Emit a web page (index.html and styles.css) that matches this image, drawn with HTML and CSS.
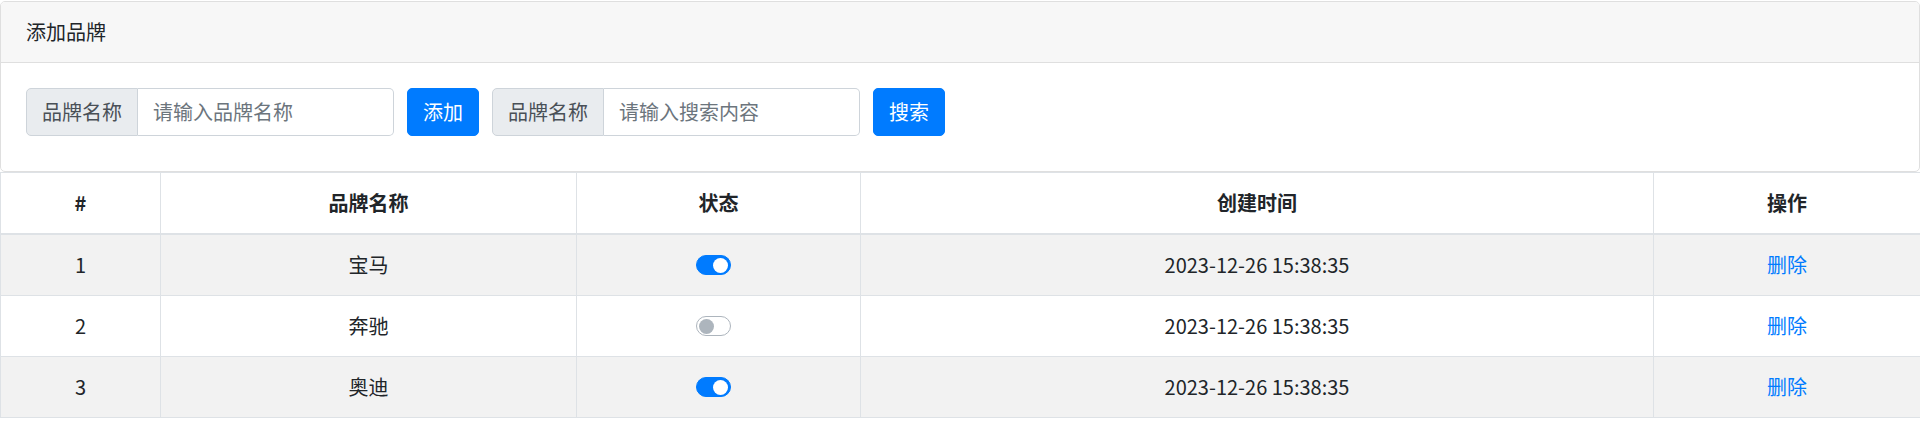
FILE: index.html
```html
<!DOCTYPE html>
<html lang="zh-CN">
<head>
<meta charset="utf-8">
<title>品牌管理</title>
<link rel="stylesheet" href="styles.css">
</head>
<body>
<div class="card">
  <div class="card-header">添加品牌</div>
  <div class="card-body">
    <form class="form-row">
      <div class="input-group">
        <span class="input-group-text">品牌名称</span>
        <input class="form-control" type="text" placeholder="请输入品牌名称">
      </div>
      <button class="btn" type="button">添加</button>
      <div class="input-group">
        <span class="input-group-text">品牌名称</span>
        <input class="form-control" type="text" placeholder="请输入搜索内容">
      </div>
      <button class="btn" type="button">搜索</button>
    </form>
  </div>
</div>
<table class="table">
  <colgroup>
    <col class="c1"><col class="c2"><col class="c3"><col class="c4"><col class="c5">
  </colgroup>
  <thead>
    <tr><th>#</th><th>品牌名称</th><th>状态</th><th>创建时间</th><th>操作</th></tr>
  </thead>
  <tbody>
    <tr>
      <td>1</td><td>宝马</td>
      <td><span class="switch on"><span class="knob"></span></span></td>
      <td>2023-12-26 15:38:35</td><td><a href="#">删除</a></td>
    </tr>
    <tr>
      <td>2</td><td>奔驰</td>
      <td><span class="switch"><span class="knob"></span></span></td>
      <td>2023-12-26 15:38:35</td><td><a href="#">删除</a></td>
    </tr>
    <tr>
      <td>3</td><td>奥迪</td>
      <td><span class="switch on"><span class="knob"></span></span></td>
      <td>2023-12-26 15:38:35</td><td><a href="#">删除</a></td>
    </tr>
  </tbody>
</table>
</body>
</html>
```
FILE: styles.css
```css
* { box-sizing: border-box; }
body {
  margin: 0;
  padding-top: 1px;
  font-family: "Noto Sans CJK SC", sans-serif;
  font-size: 20px;
  line-height: 1.5;
  color: #212529;
  background: #fff;
}
.card {
  border: 1px solid #dfdfdf;
  border-radius: 5px;
  background: #fff;
}
.card-header {
  padding: 15px 25px;
  background: #f7f7f7;
  border-bottom: 1px solid #dfdfdf;
  border-radius: 4px 4px 0 0;
}
.card-body {
  padding: 25px;
}
.form-row {
  display: flex;
  align-items: center;
  margin: 0 0 10px 0;
}
.input-group {
  display: flex;
  width: 368px;
  height: 48px;
  margin-right: 13px;
}
.input-group-text {
  display: flex;
  align-items: center;
  padding: 0 15px;
  background: #e9ecef;
  border: 1px solid #ced4da;
  border-radius: 5px 0 0 5px;
  color: #495057;
  white-space: nowrap;
}
.form-control {
  flex: 1;
  min-width: 0;
  padding: 0 15px;
  border: 1px solid #ced4da;
  border-left: none;
  border-radius: 0 5px 5px 0;
  font: inherit;
  color: #495057;
  background: #fff;
  outline: none;
}
.form-control::placeholder { color: #6c757d; opacity: 1; }
.btn {
  height: 48px;
  padding: 0 15px;
  margin-right: 13px;
  background: #007bff;
  color: #fff;
  border: 1px solid #007bff;
  border-radius: 5px;
  font: inherit;
  cursor: pointer;
}
.table {
  width: 100%;
  border-collapse: collapse;
  table-layout: fixed;
}
.c1 { width: 160px; }
.c2 { width: 416px; }
.c3 { width: 284px; }
.c4 { width: 793px; }
.c5 { width: 267px; }
.table th, .table td {
  padding: 15px;
  border: 1px solid #dee2e6;
  text-align: center;
  vertical-align: top;
}
.table th { font-weight: 700; }
.table thead th { border-bottom: 2px solid #dee2e6; }
.table tbody tr:nth-child(odd) { background: #f2f2f2; }
.table a { color: #007bff; text-decoration: none; }
.switch {
  display: inline-block;
  vertical-align: top;
  margin: 5px 10px 0 0;
  width: 35px;
  height: 20px;
  border: 1px solid #adb5bd;
  border-radius: 10px;
  background: #fff;
}
.knob {
  display: block;
  width: 15px;
  height: 15px;
  margin: 1.5px 0 0 2px;
  border-radius: 50%;
  background: #adb5bd;
}
.switch.on { background: #007bff; border-color: #007bff; }
.switch.on .knob { background: #fff; margin-left: 16px; }
```
